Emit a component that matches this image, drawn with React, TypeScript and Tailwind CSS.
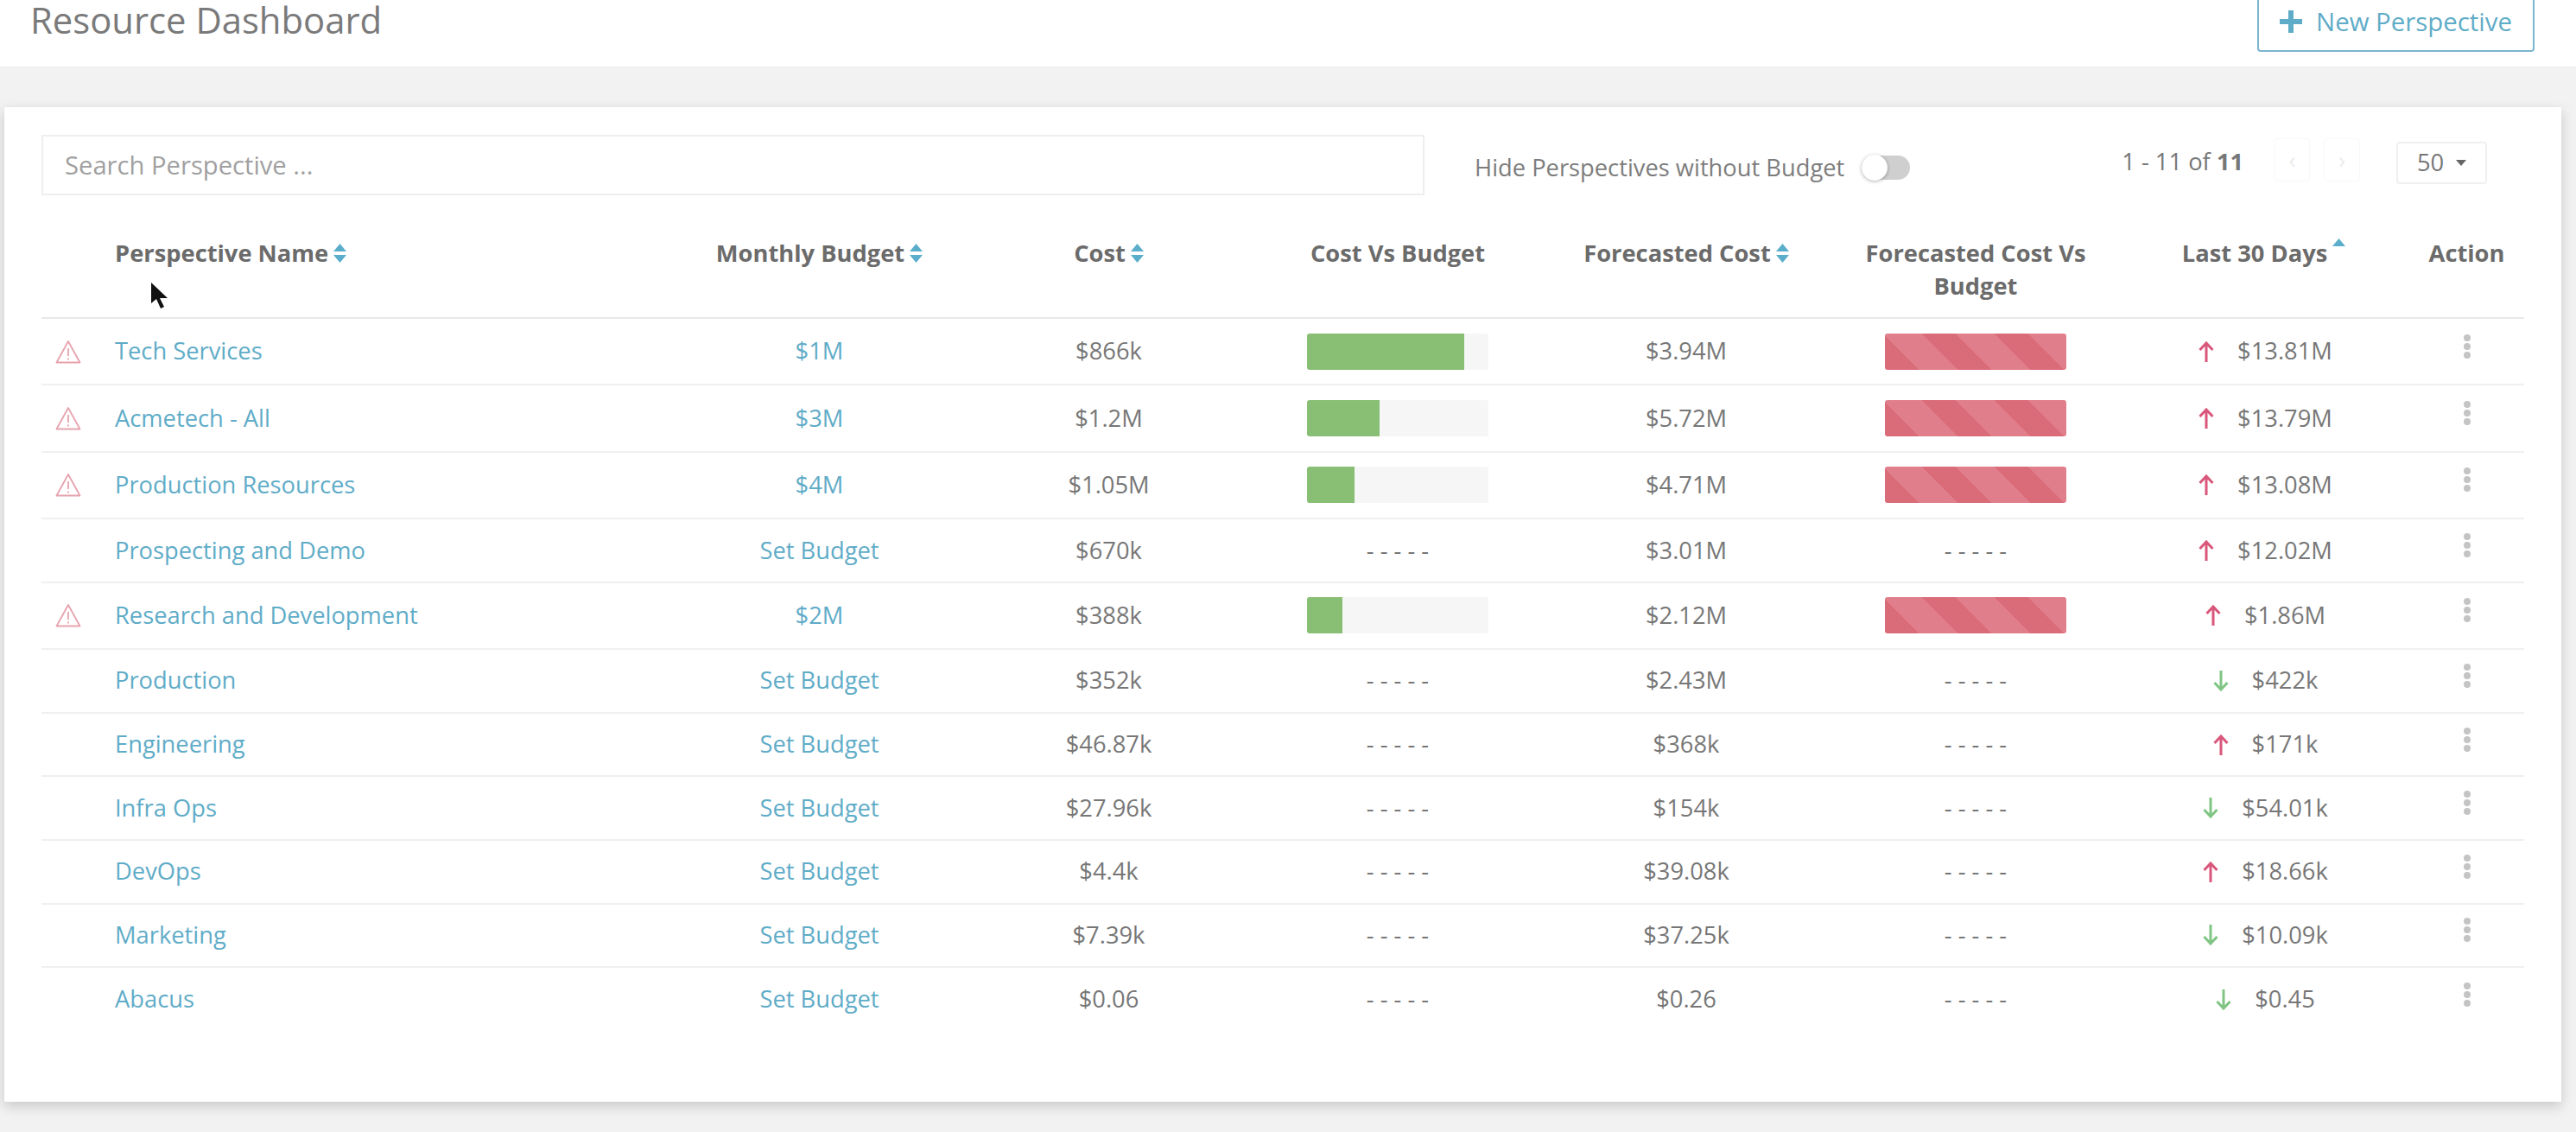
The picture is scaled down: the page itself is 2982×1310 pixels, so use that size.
type Trend = "up" | "down";

interface Row {
  name: string;
  budget: string;
  cost: string;
  used?: number;
  forecast: string;
  last30: string;
  trend: Trend;
}

const ROWS: Row[] = [
  { name: "Tech Services", budget: "$1M", cost: "$866k", used: 86.6, forecast: "$3.94M", last30: "$13.81M", trend: "up" },
  { name: "Acmetech - All", budget: "$3M", cost: "$1.2M", used: 40, forecast: "$5.72M", last30: "$13.79M", trend: "up" },
  { name: "Production Resources", budget: "$4M", cost: "$1.05M", used: 26.25, forecast: "$4.71M", last30: "$13.08M", trend: "up" },
  { name: "Prospecting and Demo", budget: "Set Budget", cost: "$670k", forecast: "$3.01M", last30: "$12.02M", trend: "up" },
  { name: "Research and Development", budget: "$2M", cost: "$388k", used: 19.4, forecast: "$2.12M", last30: "$1.86M", trend: "up" },
  { name: "Production", budget: "Set Budget", cost: "$352k", forecast: "$2.43M", last30: "$422k", trend: "down" },
  { name: "Engineering", budget: "Set Budget", cost: "$46.87k", forecast: "$368k", last30: "$171k", trend: "up" },
  { name: "Infra Ops", budget: "Set Budget", cost: "$27.96k", forecast: "$154k", last30: "$54.01k", trend: "down" },
  { name: "DevOps", budget: "Set Budget", cost: "$4.4k", forecast: "$39.08k", last30: "$18.66k", trend: "up" },
  { name: "Marketing", budget: "Set Budget", cost: "$7.39k", forecast: "$37.25k", last30: "$10.09k", trend: "down" },
  { name: "Abacus", budget: "Set Budget", cost: "$0.06", forecast: "$0.26", last30: "$0.45", trend: "down" },
];

const GRID = "grid grid-cols-[85px_648px_335px_335px_334px_334px_336px_335px_131px]";

function SortIcon({ only }: { only?: boolean }) {
  return (
    <svg width="15" height="22" viewBox="0 0 15 22" className="inline-block shrink-0 fill-[#5aaecb]">
      <path d="M7.5 0 15 9H0z" />
      {!only && <path d="M7.5 22 0 13h15z" />}
    </svg>
  );
}

function WarningIcon() {
  return (
    <svg width="30" height="28" viewBox="0 0 30 28" fill="none" className="stroke-[#e6a3ae]">
      <path d="M15 2 28.5 26.5h-27z" strokeWidth="1.8" strokeLinejoin="round" />
      <path d="M15 10v9M15 21.5v2" strokeWidth="1.8" />
    </svg>
  );
}

function TrendArrow({ trend }: { trend: Trend }) {
  const up = trend === "up";
  return (
    <svg width="18" height="24" viewBox="0 0 18 24" fill="none" strokeWidth="3" className={up ? "stroke-[#d9577a]" : "stroke-[#80c583]"}>
      {up ? <path d="M9 24V2M1.5 10 9 2l7.5 8" /> : <path d="M9 0v22M1.5 14 9 22l7.5-8" />}
    </svg>
  );
}

function Kebab() {
  return (
    <div className="flex flex-col gap-[2px] -mt-[12px]">
      <span className="w-2 h-2 rounded-full bg-[#c4c4c4]" />
      <span className="w-2 h-2 rounded-full bg-[#c4c4c4]" />
      <span className="w-2 h-2 rounded-full bg-[#c4c4c4]" />
    </div>
  );
}

function Dashes() {
  return <span className="text-[#777]">- - - - -</span>;
}

function HeaderCell({ children, sort }: { children: React.ReactNode; sort?: "both" | "up" }) {
  return (
    <div className="flex justify-center items-start gap-[6px] text-center">
      <span>{children}</span>
      {sort && (
        <span className="flex h-[38px] items-center">
          <SortIcon only={sort === "up"} />
        </span>
      )}
    </div>
  );
}

function TableRow({ row, last }: { row: Row; last: boolean }) {
  const hasBudget = row.used !== undefined;
  return (
    <div
      className={`${GRID} items-center ${hasBudget ? "h-[77.4px]" : "h-[73.6px]"} ${last ? "" : "border-b-2 border-[#f0f0f0]"}`}
    >
      <div className="flex pl-[16px]">{hasBudget && <WarningIcon />}</div>
      <a className="text-[#5facc8]">{row.name}</a>
      <a className="text-center text-[#5facc8]">{row.budget}</a>
      <div className="text-center">{row.cost}</div>
      <div className="flex justify-center">
        {hasBudget ? (
          <div className="w-[210px] h-[42px] bg-[#f6f6f6] rounded-[3px] overflow-hidden">
            <div className="h-full bg-[#88bf74]" style={{ width: `${row.used}%` }} />
          </div>
        ) : (
          <Dashes />
        )}
      </div>
      <div className="text-center">{row.forecast}</div>
      <div className="flex justify-center">
        {hasBudget ? (
          <div className="w-[210px] h-[42px] rounded-[3px] bg-[repeating-linear-gradient(45deg,#da6b78_0,#da6b78_28px,#e07f8b_28px,#e07f8b_59.4px)]" />
        ) : (
          <Dashes />
        )}
      </div>
      <div className="flex justify-center items-center gap-[27px]">
        <TrendArrow trend={row.trend} />
        <span>{row.last30}</span>
      </div>
      <div className="flex justify-center">
        <Kebab />
      </div>
    </div>
  );
}

export default function App() {
  return (
    <div className="relative h-[1310px] overflow-hidden bg-[#f2f2f2] font-['Open_Sans',sans-serif] text-[27.3px] text-[#777]">
      {/* Page header */}
      <header className="flex h-[78px] items-start justify-between bg-white pl-[35px] pr-[48px] border-b border-[#eeeeee]">
        <h1 className="text-[41.8px] leading-[46px] text-[#7a7a7a] font-normal">Resource Dashboard</h1>
        <button
          type="button"
          className="flex h-[68px] w-[321px] -mt-2 items-center justify-center gap-[16px] rounded-[4px] border-2 border-[#7ab6cf] pb-[2px] text-[29.4px] text-[#5facc8]"
        >
          <svg width="26" height="26" viewBox="0 0 26 26" className="fill-[#5facc8]">
            <path d="M10 0h6v10h10v6H16v10h-6V16H0v-6h10z" />
          </svg>
          New Perspective
        </button>
      </header>

      {/* Card */}
      <main className="ml-[5px] mt-[46px] h-[1151px] w-[2960px] bg-white px-[43px] pt-[32px] shadow-[0_5px_14px_rgba(0,0,0,0.18)]">
        <div className="flex h-[70px] items-start">
          <input
            readOnly
            placeholder="Search Perspective ..."
            className="h-[70px] w-[1601px] border-2 border-[#eeeeee] px-[25px] text-[29.2px] outline-none placeholder:text-[#a0a0a0]"
          />
          <span className="ml-[58px] mt-[18px] text-[#7d7d7d]">Hide Perspectives without Budget</span>
          <span className="relative ml-[20px] mt-[24px] h-[28px] w-[56px] rounded-full bg-[#cfcfcf]">
            <span className="absolute left-0 -top-[1px] h-[30px] w-[30px] rounded-full bg-white shadow-[0_1px_4px_rgba(0,0,0,0.3)]" />
          </span>
          <span className="ml-[245px] mt-[11px] text-[#777]">
            1 - 11 of <b className="font-bold">11</b>
          </span>
          <span className="ml-[36px] mt-[4px] flex h-[50px] w-[41px] items-center justify-center rounded-[4px] border border-[#f8f8f8] text-[#ececec]">‹</span>
          <span className="ml-[16px] mt-[4px] flex h-[50px] w-[42px] items-center justify-center rounded-[4px] border border-[#f8f8f8] text-[#ececec]">›</span>
          <span className="ml-[42px] mt-[8px] flex h-[49px] w-[105px] items-center justify-center gap-[14px] rounded-[4px] border-2 border-[#f0f0f0]">
            50
            <span className="h-0 w-0 border-x-[6px] border-t-[7px] border-x-transparent border-t-[#666]" />
          </span>
        </div>

        {/* Table */}
        <div className={`${GRID} h-[143px] border-b-2 border-[#e8e8e8] pt-[48px] font-bold leading-[38px] text-[#6b6b6b]`}>
          <div />
          <div className="flex items-start gap-[6px]">
            <span>Perspective Name</span>
            <span className="flex h-[38px] items-center">
              <SortIcon />
            </span>
          </div>
          <HeaderCell sort="both">Monthly Budget</HeaderCell>
          <HeaderCell sort="both">Cost</HeaderCell>
          <HeaderCell>Cost Vs Budget</HeaderCell>
          <HeaderCell sort="both">Forecasted Cost</HeaderCell>
          <div className="px-[20px] text-center">Forecasted Cost Vs Budget</div>
          <div className="flex justify-center items-start gap-[6px] pr-[4px]">
            <span>Last 30 Days</span>
            <span className="flex h-[26px] items-center">
              <SortIcon only />
            </span>
          </div>
          <div className="text-center">Action</div>
        </div>

        {ROWS.map((row, i) => (
          <TableRow key={row.name} row={row} last={i === ROWS.length - 1} />
        ))}
      </main>

      {/* Mouse pointer captured in the screenshot */}
      <svg width="20" height="31" viewBox="0 0 20 31" className="absolute left-[175px] top-[327px]">
        <path d="M0 0v24l6-5 5 11 4-2-5-10h9z" fill="#111" />
      </svg>
    </div>
  );
}
